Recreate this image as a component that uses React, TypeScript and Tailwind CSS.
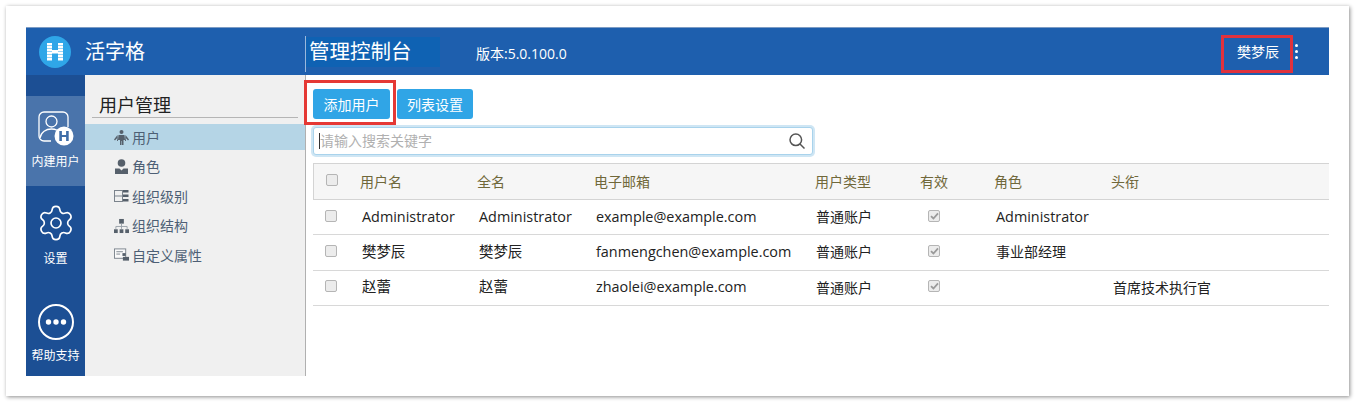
import { Settings } from "lucide-react";

const font = "font-['Open_Sans','Noto_Sans_CJK_SC',sans-serif]";

function Logo() {
  return (
    <svg width="32" height="32" viewBox="0 0 32 32">
      <circle cx="16" cy="16" r="16" fill="#2fa6e8" />
      <g fill="#fff">
        {[7, 10, 13, 16, 19, 22].map((y) => (
          <g key={y}>
            <rect x="8" y={y} width="5" height="2.5" />
            <rect x="19" y={y} width="5" height="2.5" />
          </g>
        ))}
        <rect x="13" y="14" width="6" height="3.5" />
      </g>
    </svg>
  );
}

function BuiltinIcon() {
  return (
    <svg width="37" height="35" viewBox="0 0 37 35" fill="none">
      <path d="M14 30H7a5 5 0 0 1-5-5V6a5 5 0 0 1 5-5h19a5 5 0 0 1 5 5v10" stroke="#fff" strokeWidth="1.3" />
      <circle cx="14.5" cy="10.5" r="5.5" stroke="#fff" strokeWidth="1.3" />
      <path d="M3 27c1-6 6-9 11.500-9 2 0 4 .4 5.500 1.200" stroke="#fff" strokeWidth="1.3" />
      <circle cx="27" cy="25" r="9.500" fill="#fff" />
      <g fill="#3f6da8">
        <rect x="22.300" y="20" width="2.600" height="10" />
        <rect x="29.100" y="20" width="2.600" height="10" />
        <rect x="24" y="24" width="6" height="2" />
      </g>
    </svg>
  );
}

function HelpIcon() {
  return (
    <svg width="36" height="36" viewBox="0 0 36 36">
      <circle cx="18" cy="18" r="17" fill="none" stroke="#fff" strokeWidth="2" />
      <circle cx="10.500" cy="18" r="2.700" fill="#fff" />
      <circle cx="18" cy="18" r="2.700" fill="#fff" />
      <circle cx="25.500" cy="18" r="2.700" fill="#fff" />
    </svg>
  );
}

function UsersIcon() {
  return (
    <svg width="15" height="15" viewBox="0 0 15 15" fill="#56606b">
      <circle cx="7.500" cy="2" r="2" />
      <path d="M4.500 5h6l.5 5h-1.500v5h-1.500v-4h-.5v4H6v-5H4z" />
      <path d="M3.500 5 0 9.500l1 1L3.200 8l-.2 3h1zM11.500 5 15 9.500l-1 1L11.800 8l.2 3h-1z" />
    </svg>
  );
}

function RoleIcon() {
  return (
    <svg width="15" height="16" viewBox="0 0 15 16" fill="#56606b">
      <circle cx="7.500" cy="4" r="3.800" />
      <path d="M1 9.500h4.500l2 2 2-2H14V15H1z" />
    </svg>
  );
}

function LevelIcon() {
  return (
    <svg width="15" height="14" viewBox="0 0 15 14" fill="none">
      <rect x="0.500" y="1.500" width="8" height="11" stroke="#7b838c" />
      <path d="M0.500 7h8" stroke="#7b838c" />
      <rect x="9" y="1" width="5.500" height="2.500" fill="#56606b" />
      <rect x="9" y="5.500" width="5.500" height="2.500" fill="#56606b" />
      <rect x="9" y="10" width="5.500" height="2.500" fill="#56606b" />
    </svg>
  );
}

function OrgIcon() {
  return (
    <svg width="16" height="16" viewBox="0 0 16 16" fill="#56606b">
      <rect x="5.500" y="0.500" width="5" height="5" />
      <path d="M8 5.500v3M2 11V8.500h12V11M8 8.500V11" stroke="#9aa2aa" fill="none" />
      <rect x="0" y="11.500" width="4" height="4" />
      <rect x="6" y="11.500" width="4" height="4" />
      <rect x="12" y="11.500" width="4" height="4" />
    </svg>
  );
}

function AttrIcon() {
  return (
    <svg width="16" height="14" viewBox="0 0 16 14" fill="none">
      <rect x="0.500" y="0.500" width="12" height="10" fill="#fafafa" stroke="#7b838c" />
      <path d="M2.500 3.500h7M2.500 6h4" stroke="#7b838c" />
      <rect x="9" y="5" width="3.500" height="3" fill="#56606b" />
      <rect x="9.500" y="9" width="6.500" height="4" fill="#56606b" />
    </svg>
  );
}

function Box({ checked }: { checked?: boolean }) {
  return (
    <span className="flex h-[12px] w-[12px] items-center justify-center rounded-[2px] border border-[#b5b5b5] bg-[#ececec]">
      {checked && (
        <svg width="9" height="8" viewBox="0 0 9 8">
          <path d="M1 4.200 3.400 6.500 8 1.300" fill="none" stroke="#9a9a9a" strokeWidth="1.800" />
        </svg>
      )}
    </span>
  );
}

function RailItem({ icon, label, className, gap }: { icon: React.ReactNode; label: string; className: string; gap: string }) {
  return (
    <div className={`flex flex-col items-center text-[12px] leading-[16px] text-white ${className}`}>
      {icon}
      <span className={gap}>{label}</span>
    </div>
  );
}

const menu = [
  { icon: <UsersIcon />, label: "用户", active: true },
  { icon: <RoleIcon />, label: "角色" },
  { icon: <LevelIcon />, label: "组织级别" },
  { icon: <OrgIcon />, label: "组织结构" },
  { icon: <AttrIcon />, label: "自定义属性" },
];

const headCols = "grid grid-cols-[46px_117px_117px_221px_105px_74px_117px_1fr]";
const bodyCols = "grid grid-cols-[47px_117px_117px_220px_105px_75px_117px_1fr]";
const latin = "text-[14.400px]";

const rows = [
  ["Administrator", "Administrator", "example@example.com", "普通账户", "Administrator", ""],
  ["樊梦辰", "樊梦辰", "fanmengchen@example.com", "普通账户", "事业部经理", ""],
  ["赵蕾", "赵蕾", "zhaolei@example.com", "普通账户", "", "首席技术执行官"],
];

export default function App() {
  return (
    <div className={`h-[402px] w-[1355px] overflow-hidden bg-white p-[6px] ${font}`}>
      <div className="h-[390px] w-[1343px] bg-white px-[20px] pt-[21px] shadow-[1px_1px_4px_rgba(0,0,0,0.45)]">
        <div className="relative w-[1303px]">
          <header className="flex h-[48px] items-center border-t border-[#7d9cc4] bg-[#1e5fae] text-white">
            <div className="flex w-[279px] items-center pl-[13px]">
              <Logo />
              <span className="ml-[14px] text-[20px]">活字格</span>
            </div>
            <div className="mt-[8px] h-[36px] w-px self-start bg-[#9ab8dc]" />
            <div className="flex h-[30px] w-[134px] items-center bg-[#0f62b3] pl-[3px] text-[20.500px] whitespace-nowrap">管理控制台</div>
            <span className="ml-[36px] mt-[3px] text-[14px]">版本:5.0.100.0</span>
            <span className="ml-auto text-[14px]">樊梦辰</span>
            <span className="ml-[16px] mr-[31px] flex flex-col gap-[3px]">
              <i className="h-[3px] w-[3px] rounded-full bg-white" />
              <i className="h-[3px] w-[3px] rounded-full bg-white" />
              <i className="h-[3px] w-[3px] rounded-full bg-white" />
            </span>
          </header>

          <div className="flex h-[301px]">
            <aside className="w-[59px] shrink-0 bg-[#1c4f94] pt-[21px]">
              <RailItem icon={<BuiltinIcon />} label="内建用户" gap="mt-[8px]" className="h-[90px] bg-[#4a74ab] pt-[15px]" />
              <RailItem icon={<Settings size={40} strokeWidth={1} />} label="设置" gap="mt-[8px]" className="mt-[17px] h-[70px]" />
              <RailItem icon={<HelpIcon />} label="帮助支持" gap="mt-[8px]" className="mt-[31px]" />
            </aside>

            <nav className="w-[221px] shrink-0 border-r border-[#b0b0b0] bg-[#f0f0f0] text-[14px] text-[#4d5f75]">
              <div className="mx-[7px] mt-[18px] h-[25px] border-b border-[#b5b5b5] pl-[7px] text-[18px] leading-[25px] text-[#222]">用户管理</div>
              <ul className="mt-[6px]">
                {menu.map((m) => (
                  <li key={m.label} className={`mb-[3.500px] flex h-[26px] items-center gap-[3px] pl-[29px] ${m.active ? "bg-[#b5d5e6]" : ""}`}>
                    <span className="flex w-[15px] justify-center">{m.icon}</span>
                    <span>{m.label}</span>
                  </li>
                ))}
              </ul>
            </nav>

            <main className="min-w-0 flex-1 pl-[7px] pt-[14px]">
              <div className="flex gap-[7px] text-[14px] text-white">
                <button className="flex h-[30px] w-[77px] items-center justify-center rounded-[3px] bg-[#30a5e6]">添加用户</button>
                <button className="flex h-[30px] w-[76px] items-center justify-center rounded-[3px] bg-[#30a5e6]">列表设置</button>
              </div>
              <div className="mt-[8px] flex h-[28px] w-[500px] items-center rounded-[3px] border border-[#a9d3ec] bg-white pl-[5px] pr-[7px] shadow-[0_0_0_2px_#cfe6f4]">
                <span className="h-[16px] w-px bg-[#333]" />
                <span className="mt-[-2px] text-[14px] text-[#b0b0b0]">请输入搜索关键字</span>
                <svg className="ml-auto" width="16" height="16" viewBox="0 0 16 16" fill="none" stroke="#555" strokeWidth="1.500">
                  <circle cx="6.800" cy="6.800" r="5.800" />
                  <path d="m11 11 4.500 4.500" />
                </svg>
              </div>

              <div className="mt-[8px] text-[14px]">
                <div className={`${headCols} h-[37px] items-center border-y border-l border-[#d4d4d4] bg-[#f6f6f6] text-[#70683a]`}>
                  <span className="pb-[3px] pl-[12px]"><Box /></span>
                  <span className="pb-[1px]">用户名</span>
                  <span className="pb-[1px]">全名</span>
                  <span className="pb-[1px]">电子邮箱</span>
                  <span className="pb-[1px]">用户类型</span>
                  <span className="pb-[1px]">有效</span>
                  <span className="pb-[1px]">角色</span>
                  <span className="pb-[1px]">头衔</span>
                </div>
                {rows.map((r) => (
                  <div key={r[2]} className={`${bodyCols} h-[35.300px] items-center border-b border-[#d8d8d8] text-[#222]`}>
                    <span className="pb-[3px] pl-[12px]"><Box /></span>
                    <span className={`pb-[1px] pl-[2px] ${latin}`}>{r[0]}</span>
                    <span className={`pb-[1px] pl-[2px] ${latin}`}>{r[1]}</span>
                    <span className={`pb-[1px] pl-[2px] ${latin}`}>{r[2]}</span>
                    <span className="pb-[1px] pl-[2px]">{r[3]}</span>
                    <span className="pb-[3px] pl-[9px]"><Box checked /></span>
                    <span className={r[4] === "Administrator" ? `pb-[1px] pl-[2px] ${latin}` : "pb-[1px] pl-[2px]"}>{r[4]}</span>
                    <span className="pb-[1px] pl-[2px]">{r[5]}</span>
                  </div>
                ))}
              </div>
            </main>
          </div>

          <div className="pointer-events-none absolute left-[278px] top-[53px] h-[45px] w-[92px] border-[3px] border-[#e53935]" />
          <div className="pointer-events-none absolute left-[1195px] top-[8px] h-[38px] w-[72px] border-[3px] border-[#e0323c]" />
        </div>
      </div>
    </div>
  );
}
